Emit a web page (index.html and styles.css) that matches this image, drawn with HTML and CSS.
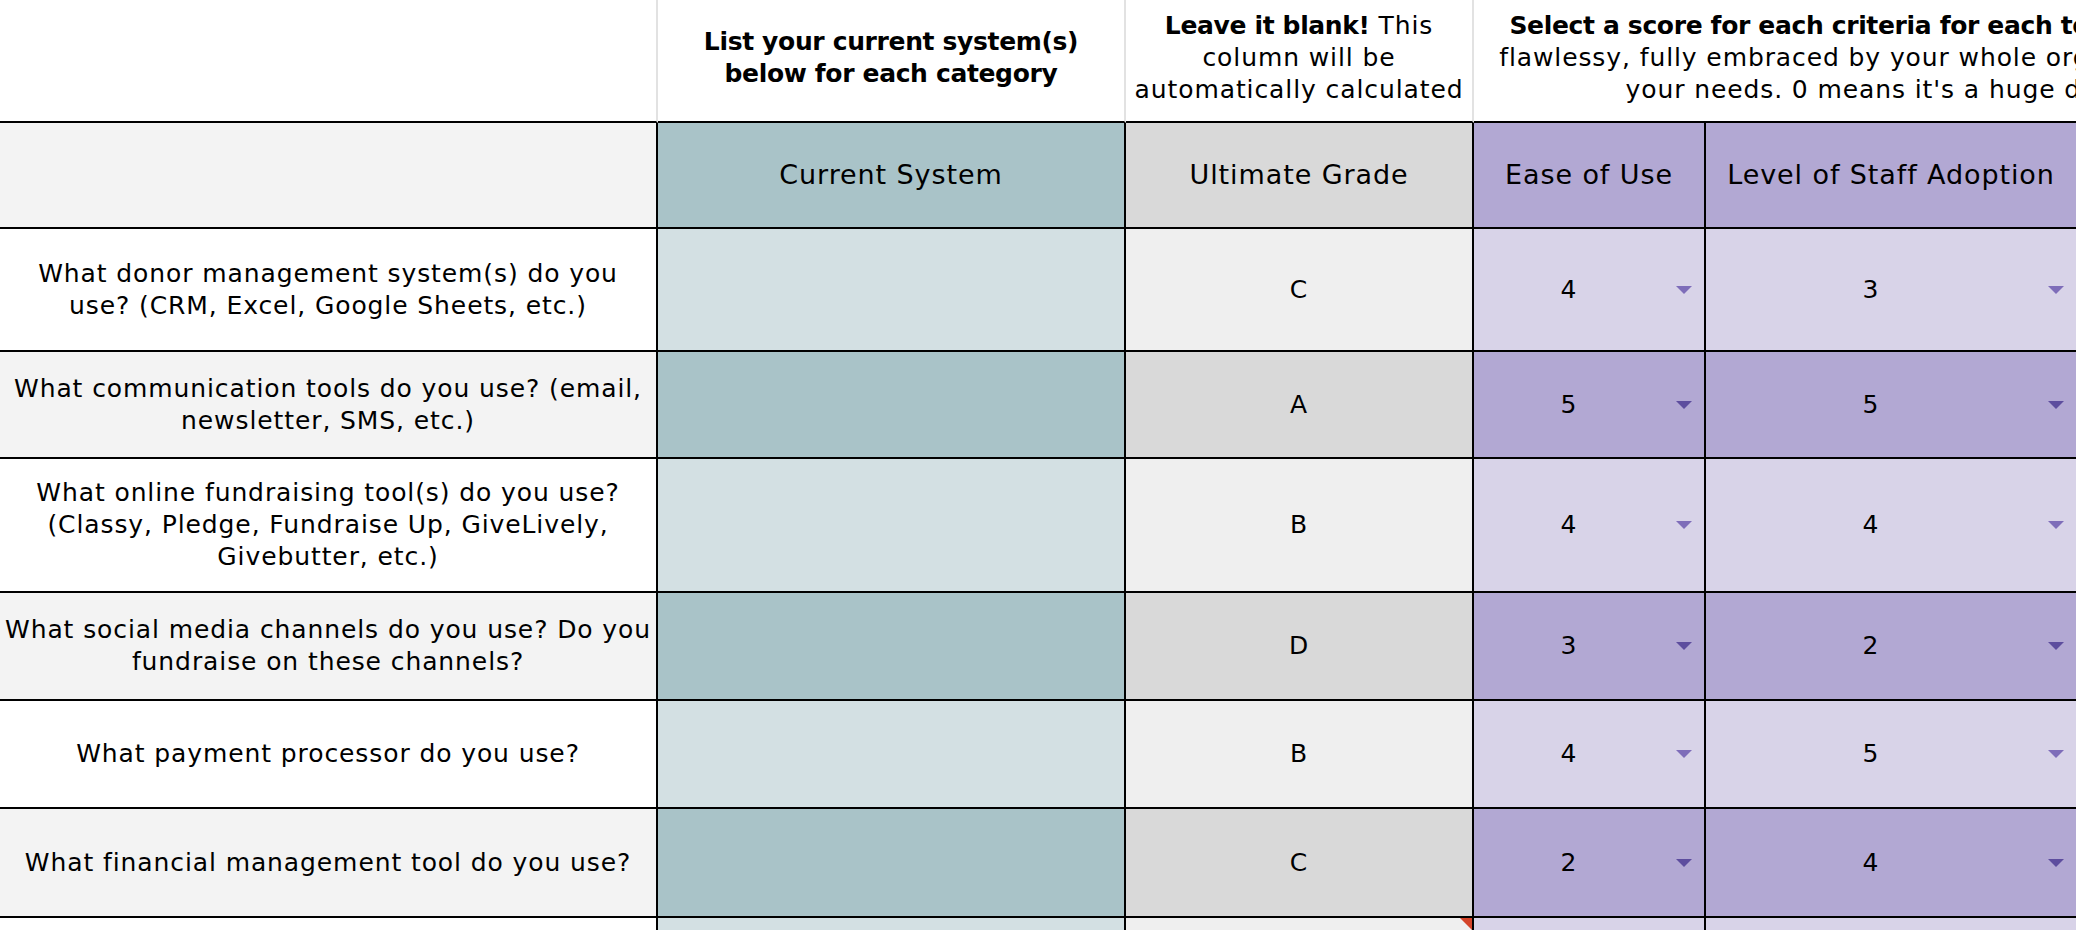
FILE: index.html
```html
<!DOCTYPE html>
<html lang="en">
<head>
<meta charset="utf-8">
<title>Tech Stack Audit</title>
<link rel="stylesheet" href="styles.css">
</head>
<body>
<div class="sheet">
  <!-- instruction row -->
  <div class="cell note-row"></div>
  <div class="cell note-row"><b>List your current system(s)<br>below for each category</b></div>
  <div class="cell note-row"><span><b>Leave it blank!</b> This<br>column will be<br>automatically calculated</span></div>
  <div class="cell note-row note-wide"><span><b>Select a score for each criteria for each tool.</b> 5 means it works<br>flawlessy, fully embraced by your whole organization, and meets<br>your needs. 0 means it's a huge disadvantage</span></div>

  <!-- column headings -->
  <div class="cell head q-alt"></div>
  <div class="cell head sys-dark">Current System</div>
  <div class="cell head grade-dark">Ultimate Grade</div>
  <div class="cell head score-dark">Ease of Use</div>
  <div class="cell head score-dark">Level of Staff Adoption</div>
  <div class="cell head score-dark">Cost Effectiveness</div>

  <!-- row 1 -->
  <div class="cell q">What donor management system(s) do you<br>use? (CRM, Excel, Google Sheets, etc.)</div>
  <div class="cell sys-light"></div>
  <div class="cell grade-light">C</div>
  <div class="cell score score-light"><span class="val">4</span><svg class="arrow" viewBox="0 0 16 8"><path d="M0 0H16L8 8Z"/></svg></div>
  <div class="cell score score-light"><span class="val">3</span><svg class="arrow" viewBox="0 0 16 8"><path d="M0 0H16L8 8Z"/></svg></div>
  <div class="cell score score-light"><span class="val">3</span><svg class="arrow" viewBox="0 0 16 8"><path d="M0 0H16L8 8Z"/></svg></div>

  <!-- row 2 -->
  <div class="cell q q-alt">What communication tools do you use? (email,<br>newsletter, SMS, etc.)</div>
  <div class="cell sys-dark"></div>
  <div class="cell grade-dark">A</div>
  <div class="cell score score-dark"><span class="val">5</span><svg class="arrow" viewBox="0 0 16 8"><path d="M0 0H16L8 8Z"/></svg></div>
  <div class="cell score score-dark"><span class="val">5</span><svg class="arrow" viewBox="0 0 16 8"><path d="M0 0H16L8 8Z"/></svg></div>
  <div class="cell score score-dark"><span class="val">4</span><svg class="arrow" viewBox="0 0 16 8"><path d="M0 0H16L8 8Z"/></svg></div>

  <!-- row 3 -->
  <div class="cell q">What online fundraising tool(s) do you use?<br>(Classy, Pledge, Fundraise Up, GiveLively,<br>Givebutter, etc.)</div>
  <div class="cell sys-light"></div>
  <div class="cell grade-light">B</div>
  <div class="cell score score-light"><span class="val">4</span><svg class="arrow" viewBox="0 0 16 8"><path d="M0 0H16L8 8Z"/></svg></div>
  <div class="cell score score-light"><span class="val">4</span><svg class="arrow" viewBox="0 0 16 8"><path d="M0 0H16L8 8Z"/></svg></div>
  <div class="cell score score-light"><span class="val">3</span><svg class="arrow" viewBox="0 0 16 8"><path d="M0 0H16L8 8Z"/></svg></div>

  <!-- row 4 -->
  <div class="cell q q-alt">What social media channels do you use? Do you<br>fundraise on these channels?</div>
  <div class="cell sys-dark"></div>
  <div class="cell grade-dark">D</div>
  <div class="cell score score-dark"><span class="val">3</span><svg class="arrow" viewBox="0 0 16 8"><path d="M0 0H16L8 8Z"/></svg></div>
  <div class="cell score score-dark"><span class="val">2</span><svg class="arrow" viewBox="0 0 16 8"><path d="M0 0H16L8 8Z"/></svg></div>
  <div class="cell score score-dark"><span class="val">2</span><svg class="arrow" viewBox="0 0 16 8"><path d="M0 0H16L8 8Z"/></svg></div>

  <!-- row 5 -->
  <div class="cell q">What payment processor do you use?</div>
  <div class="cell sys-light"></div>
  <div class="cell grade-light">B</div>
  <div class="cell score score-light"><span class="val">4</span><svg class="arrow" viewBox="0 0 16 8"><path d="M0 0H16L8 8Z"/></svg></div>
  <div class="cell score score-light"><span class="val">5</span><svg class="arrow" viewBox="0 0 16 8"><path d="M0 0H16L8 8Z"/></svg></div>
  <div class="cell score score-light"><span class="val">4</span><svg class="arrow" viewBox="0 0 16 8"><path d="M0 0H16L8 8Z"/></svg></div>

  <!-- row 6 -->
  <div class="cell q q-alt">What financial management tool do you use?</div>
  <div class="cell sys-dark"></div>
  <div class="cell grade-dark">C</div>
  <div class="cell score score-dark"><span class="val">2</span><svg class="arrow" viewBox="0 0 16 8"><path d="M0 0H16L8 8Z"/></svg></div>
  <div class="cell score score-dark"><span class="val">4</span><svg class="arrow" viewBox="0 0 16 8"><path d="M0 0H16L8 8Z"/></svg></div>
  <div class="cell score score-dark"><span class="val">3</span><svg class="arrow" viewBox="0 0 16 8"><path d="M0 0H16L8 8Z"/></svg></div>

  <!-- row 7 (partly visible) -->
  <div class="cell q"></div>
  <div class="cell sys-light"></div>
  <div class="cell grade-light has-note"><span class="note-mark"></span></div>
  <div class="cell score score-light"></div>
  <div class="cell score score-light"></div>
  <div class="cell score score-light"></div>
</div>
</body>
</html>
```

FILE: styles.css
```css
html, body {
  margin: 0;
  padding: 0;
  overflow: hidden;
  background: #ffffff;
}

body {
  font-family: "DejaVu Sans", "Liberation Sans", sans-serif;
  font-size: 25px;
  line-height: 32px;
  letter-spacing: 0.9px;
  color: #000;
}

.sheet {
  display: grid;
  grid-template-columns: 658px 468px 348px 232px 372px 318px;
  grid-template-rows: 123px 106px 123px 107px 134px 108px 108px 109px 108px;
}

.cell {
  box-sizing: border-box;
  display: flex;
  align-items: center;
  justify-content: center;
  text-align: center;
  border-right: 2px solid #000;
  border-bottom: 2px solid #000;
  padding: 0 4px;
  white-space: nowrap;
}

b {
  letter-spacing: -0.35px;
}

/* instruction row */
.note-row {
  background: #ffffff;
  border-right-color: #e2e2e2;
  padding-bottom: 5px;
}

.note-wide {
  grid-column: span 3;
  border-right: none;
  padding-left: 0;
  padding-right: 0;
}

/* column headings */
.head {
  font-size: 27px;
}

.q {
  background: #ffffff;
}

.q-alt {
  background: #f3f3f3;
}

.sys-dark { background: #a9c3c8; }
.sys-light { background: #d3e0e3; }
.grade-dark { background: #d9d9d9; }
.grade-light { background: #efefef; }
.score-dark { background: #b2a8d3; }
.score-light { background: #d8d3e8; }

/* dropdown score cells */
.score {
  justify-content: flex-start;
  gap: 12px;
  padding: 0 12px 0 0;
}

.val {
  flex: 1;
  text-align: center;
}

.arrow {
  width: 16px;
  height: 8px;
  flex: none;
}

.score-light .arrow { fill: #7e6db9; }
.score-dark .arrow { fill: #5d4d9e; }

/* comment indicator */
.has-note {
  position: relative;
}

.note-mark {
  position: absolute;
  top: 0;
  right: 0;
  width: 12px;
  height: 12px;
  background: #d4442a;
  clip-path: polygon(0 0, 100% 0, 100% 100%);
}
```
